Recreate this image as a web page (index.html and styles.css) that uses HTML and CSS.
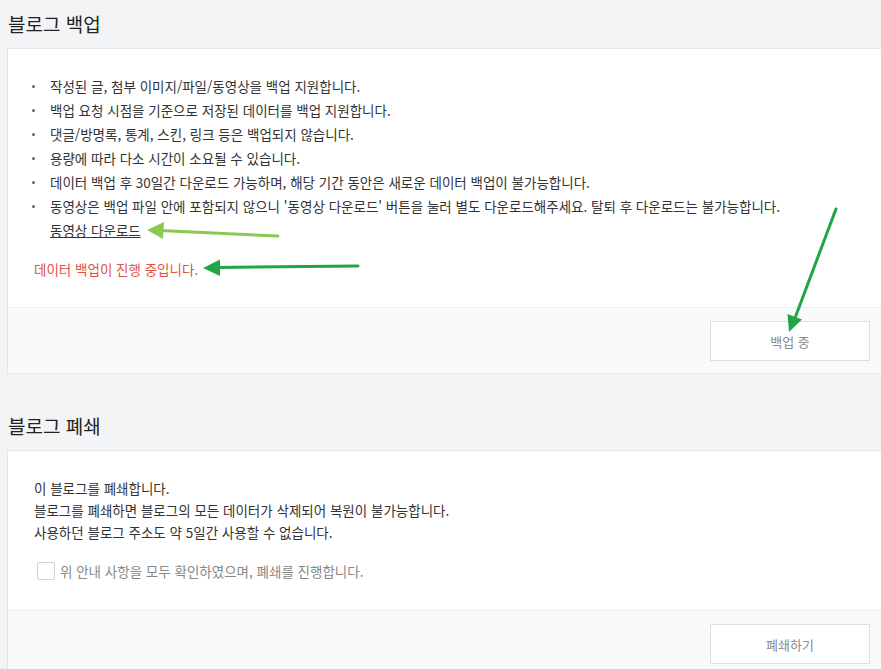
FILE: index.html
```html
<!DOCTYPE html>
<html lang="ko">
<head>
<meta charset="utf-8">
<link rel="stylesheet" href="styles.css">
</head>
<body>
<div class="page">
  <section class="section">
    <h2 class="title">블로그 백업</h2>
    <div class="card">
      <div class="card-body">
        <ul class="bullets">
          <li>작성된 글, 첨부 이미지/파일/동영상을 백업 지원합니다.</li>
          <li>백업 요청 시점을 기준으로 저장된 데이터를 백업 지원합니다.</li>
          <li>댓글/방명록, 통계, 스킨, 링크 등은 백업되지 않습니다.</li>
          <li>용량에 따라 다소 시간이 소요될 수 있습니다.</li>
          <li>데이터 백업 후 30일간 다운로드 가능하며, 해당 기간 동안은 새로운 데이터 백업이 불가능합니다.</li>
          <li>동영상은 백업 파일 안에 포함되지 않으니 '동영상 다운로드' 버튼을 눌러 별도 다운로드해주세요. 탈퇴 후 다운로드는 불가능합니다.<br><a class="link" href="#">동영상 다운로드</a></li>
        </ul>
        <p class="status">데이터 백업이 진행 중입니다.</p>
      </div>
      <div class="card-foot">
        <button class="btn" type="button">백업 중</button>
      </div>
    </div>
  </section>

  <section class="section section-close">
    <h2 class="title">블로그 폐쇄</h2>
    <div class="card">
      <div class="card-body body-close">
        <p class="desc">이 블로그를 폐쇄합니다.<br>블로그를 폐쇄하면 블로그의 모든 데이터가 삭제되어 복원이 불가능합니다.<br>사용하던 블로그 주소도 약 5일간 사용할 수 없습니다.</p>
        <label class="check"><span class="box"></span><span class="check-text">위 안내 사항을 모두 확인하였으며, 폐쇄를 진행합니다.</span></label>
      </div>
      <div class="card-foot">
        <button class="btn" type="button">폐쇄하기</button>
      </div>
    </div>
  </section>
</div>

<svg class="annot" width="881" height="669" viewBox="0 0 881 669" xmlns="http://www.w3.org/2000/svg">
  <g stroke-linecap="round">
    <line x1="278" y1="236" x2="160" y2="230.5" stroke="#8dc851" stroke-width="3"/>
    <polygon points="147,230 164,222 163,239" fill="#8dc851"/>
    <line x1="358" y1="266" x2="216" y2="267.5" stroke="#22a547" stroke-width="3"/>
    <polygon points="203,268 220,259.5 220,276" fill="#22a547"/>
    <line x1="836" y1="209" x2="795" y2="318" stroke="#22a547" stroke-width="3"/>
    <polygon points="789,332 787.5,314 802,319.5" fill="#22a547"/>
  </g>
</svg>
</body>
</html>
```

FILE: styles.css
```css
html, body {
  margin: 0;
  padding: 0;
}
body {
  background: #f3f4f6;
  font-family: "Noto Sans CJK KR", "Noto Sans", sans-serif;
  color: #333;
  overflow: hidden;
  width: 881px;
  height: 669px;
  position: relative;
}
.page {
  padding: 0 0 0 7px;
}
.section {
  margin: 0;
}
.title {
  margin: 0;
  padding: 10px 0 0 1px;
  height: 38px;
  font-size: 19px;
  font-weight: 400;
  line-height: 28px;
  color: #222;
}
.section-close {
  margin-top: 28px;
}
.card {
  width: 900px;
  background: #fff;
  border: 1px solid #e4e6e9;
}
.card-body {
  padding: 25px 0 26px 27px;
}
.bullets {
  list-style: none;
  margin: 0;
  padding: 0;
  font-size: 13.5px;
  line-height: 24px;
}
.bullets li {
  position: relative;
  padding-left: 15px;
}
.bullets li::before {
  content: "";
  position: absolute;
  left: -3px;
  top: 11px;
  width: 3px;
  height: 3px;
  border-radius: 50%;
  background: #666;
}
.link {
  color: #333;
  text-decoration: underline;
}
.status {
  margin: 15px 0 0 -1px;
  font-size: 13.5px;
  line-height: 24px;
  color: #e2513d;
}
.card-foot {
  background: #f9fafb;
  border-top: 1px solid #eceef0;
  padding: 13px 38px 12px 0;
  display: flex;
  justify-content: flex-end;
}
.btn {
  width: 160px;
  height: 40px;
  background: #fff;
  border: 1px solid #dcdfe3;
  font-family: inherit;
  font-size: 13px;
  color: #8a8a8a;
  padding: 0;
}
.body-close {
  padding: 26px 0 29px 26px;
}
.desc {
  margin: 0;
  font-size: 13.5px;
  line-height: 22px;
  color: #333;
}
.check {
  display: flex;
  align-items: center;
  gap: 5px;
  margin: 18px 0 0 3px;
  font-size: 13.5px;
  line-height: 20px;
  color: #888;
}
.box {
  width: 16px;
  height: 16px;
  border: 1px solid #cfd2d6;
  border-radius: 2px;
  background: #fff;
}
.annot {
  position: absolute;
  left: 0;
  top: 0;
  pointer-events: none;
}
```
